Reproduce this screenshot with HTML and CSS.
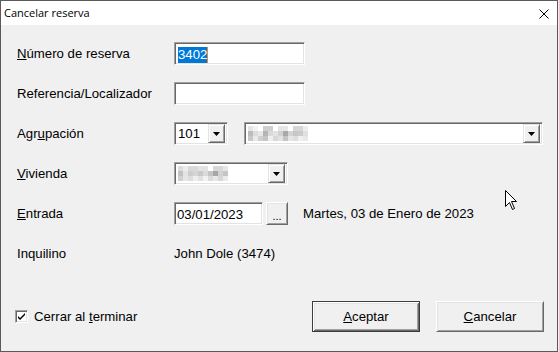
FILE: index.html
```html
<!DOCTYPE html>
<html lang="es">
<head>
    <meta charset="UTF-8">
    <meta name="viewport" content="width=device-width, initial-scale=1.0">
    <title>Cancelar reserva</title>
    <link rel="stylesheet" href="styles.css">
</head>
<body>
    <div class="window">
        <div class="titlebar">
            <span class="title">Cancelar reserva</span>
            <svg class="close" width="10" height="10" viewBox="0 0 10 10">
                <path d="M0.5 0.5 L9.5 9.5 M9.5 0.5 L0.5 9.5" stroke="#000" stroke-width="1" fill="none"/>
            </svg>
        </div>
        <div class="client">
            <div class="form">
                <div class="row">
                    <label class="lbl"><u>N</u>úmero de reserva</label>
                    <div class="edit edit-num"><span class="sel">3402</span><span class="caret"></span></div>
                </div>
                <div class="row">
                    <label class="lbl">Referencia/Localizador</label>
                    <div class="edit edit-num"></div>
                </div>
                <div class="row">
                    <label class="lbl">Agr<u>u</u>pación</label>
                    <div class="combo combo-small">
                        <span class="combo-text">101</span>
                        <span class="drop"><svg width="7" height="4" viewBox="0 0 7 4"><polygon points="0,0 7,0 3.5,4" fill="#000"/></svg></span>
                    </div>
                    <div class="combo combo-wide">
                        <svg class="blur" width="62" height="15" viewBox="0 0 62 15">
                            <rect x="0" y="0" width="5" height="5" fill="#e4e4e4"/>
                            <rect x="5" y="0" width="5" height="5" fill="#f2f2f2"/>
                            <rect x="15" y="0" width="10" height="5" fill="#cfcfcf"/>
                            <rect x="30" y="0" width="10" height="5" fill="#e6e6e6"/>
                            <rect x="45" y="0" width="10" height="5" fill="#d6d6d6"/>
                            <rect x="55" y="0" width="5" height="5" fill="#ededed"/>
                            <rect x="0" y="5" width="5" height="5" fill="#bdbdbd"/>
                            <rect x="5" y="5" width="5" height="5" fill="#dcdcdc"/>
                            <rect x="10" y="5" width="5" height="5" fill="#e8e8e8"/>
                            <rect x="15" y="5" width="5" height="5" fill="#b5b5b5"/>
                            <rect x="20" y="5" width="5" height="5" fill="#dadada"/>
                            <rect x="25" y="5" width="5" height="5" fill="#e3e3e3"/>
                            <rect x="30" y="5" width="5" height="5" fill="#d2d2d2"/>
                            <rect x="35" y="5" width="5" height="5" fill="#a9a9a9"/>
                            <rect x="40" y="5" width="5" height="5" fill="#d4d4d4"/>
                            <rect x="45" y="5" width="5" height="5" fill="#c7c7c7"/>
                            <rect x="50" y="5" width="5" height="5" fill="#cbcbcb"/>
                            <rect x="55" y="5" width="5" height="5" fill="#e0e0e0"/>
                            <rect x="0" y="10" width="5" height="5" fill="#c8c8c8"/>
                            <rect x="5" y="10" width="5" height="5" fill="#e9e9e9"/>
                            <rect x="10" y="10" width="5" height="5" fill="#d0d0d0"/>
                            <rect x="15" y="10" width="5" height="5" fill="#c5c5c5"/>
                            <rect x="20" y="10" width="5" height="5" fill="#efefef"/>
                            <rect x="25" y="10" width="5" height="5" fill="#d8d8d8"/>
                            <rect x="30" y="10" width="5" height="5" fill="#e2e2e2"/>
                            <rect x="35" y="10" width="5" height="5" fill="#c4c4c4"/>
                            <rect x="40" y="10" width="5" height="5" fill="#e6e6e6"/>
                            <rect x="45" y="10" width="5" height="5" fill="#dedede"/>
                            <rect x="50" y="10" width="5" height="5" fill="#f0f0f0"/>
                            <rect x="55" y="10" width="5" height="5" fill="#e8e8e8"/>
                        </svg>
                        <span class="drop"><svg width="7" height="4" viewBox="0 0 7 4"><polygon points="0,0 7,0 3.5,4" fill="#000"/></svg></span>
                    </div>
                </div>
                <div class="row">
                    <label class="lbl"><u>V</u>ivienda</label>
                    <div class="combo combo-mid">
                        <svg class="blur" width="60" height="17" viewBox="0 0 60 17">
                            <rect x="0" y="1" width="5" height="5" fill="#dcdcdc"/>
                            <rect x="5" y="1" width="5" height="5" fill="#ececec"/>
                            <rect x="10" y="1" width="10" height="5" fill="#d9d9d9"/>
                            <rect x="20" y="1" width="10" height="5" fill="#e3e3e3"/>
                            <rect x="35" y="1" width="10" height="5" fill="#d8d8d8"/>
                            <rect x="45" y="1" width="5" height="5" fill="#e6e6e6"/>
                            <rect x="0" y="6" width="5" height="5" fill="#c2c2c2"/>
                            <rect x="5" y="6" width="5" height="5" fill="#e4e4e4"/>
                            <rect x="10" y="6" width="5" height="5" fill="#cdcdcd"/>
                            <rect x="15" y="6" width="5" height="5" fill="#d5d5d5"/>
                            <rect x="20" y="6" width="5" height="5" fill="#c9c9c9"/>
                            <rect x="25" y="6" width="5" height="5" fill="#dadada"/>
                            <rect x="30" y="6" width="5" height="5" fill="#c4c4c4"/>
                            <rect x="35" y="6" width="5" height="5" fill="#a6a6a6"/>
                            <rect x="40" y="6" width="5" height="5" fill="#d2d2d2"/>
                            <rect x="45" y="6" width="5" height="5" fill="#c6c6c6"/>
                            <rect x="0" y="11" width="5" height="5" fill="#d0d0d0"/>
                            <rect x="5" y="11" width="5" height="5" fill="#e5e5e5"/>
                            <rect x="10" y="11" width="5" height="5" fill="#dddddd"/>
                            <rect x="15" y="11" width="5" height="5" fill="#eeeeee"/>
                            <rect x="20" y="11" width="5" height="5" fill="#e1e1e1"/>
                            <rect x="25" y="11" width="5" height="5" fill="#f2f2f2"/>
                            <rect x="30" y="11" width="5" height="5" fill="#dbdbdb"/>
                            <rect x="35" y="11" width="5" height="5" fill="#e8e8e8"/>
                            <rect x="40" y="11" width="5" height="5" fill="#d7d7d7"/>
                            <rect x="45" y="11" width="5" height="5" fill="#ebebeb"/>
                        </svg>
                        <span class="drop"><svg width="7" height="4" viewBox="0 0 7 4"><polygon points="0,0 7,0 3.5,4" fill="#000"/></svg></span>
                    </div>
                </div>
                <div class="row">
                    <label class="lbl"><u>E</u>ntrada</label>
                    <div class="edit edit-date">03/01/2023</div>
                    <button class="btn-dots">...</button>
                    <span class="date-text">Martes, 03 de Enero de 2023</span>
                </div>
                <div class="row">
                    <label class="lbl">Inquilino</label>
                    <span class="value">John Dole (3474)</span>
                </div>
            </div>
            <div class="footer">
                <span class="check">
                    <svg width="9" height="9" viewBox="0 0 9 9"><path d="M1 4 L3 6 L8 1 L8 3 L3 8 L1 6 Z" fill="#000"/></svg>
                </span>
                <span class="check-label">Cerrar al <u>t</u>erminar</span>
                <button class="btn btn-default"><u>A</u>ceptar</button>
                <button class="btn"><u>C</u>ancelar</button>
            </div>
        </div>
        <svg class="cursor" width="13" height="21" viewBox="0 0 13 21">
            <path d="M0.5 0.5 L0.5 16.5 L4.5 12.5 L7.5 19.5 L9.5 18.5 L6.5 11.5 L11.5 11.5 Z" fill="#fff" stroke="#000" stroke-width="1"/>
        </svg>
    </div>
</body>
</html>
```

FILE: styles.css
```css
body {
    margin: 0;
    font-family: 'Liberation Sans', Arial, sans-serif;
    font-size: 13.2px;
    color: #000;
    background: #f0f0f0;
}
.window {
    position: relative;
    width: 558px;
    height: 352px;
    box-sizing: border-box;
    border: 1px solid #5a5a5a;
    background: #f0f0f0;
    overflow: hidden;
}
.titlebar {
    height: 24px;
    background: #fff;
    display: flex;
    align-items: center;
}
.title {
    font-family: 'Open Sans', 'Noto Sans', sans-serif;
    font-size: 11px;
    padding-left: 3px;
    margin-top: -1px;
}
.close {
    margin-left: auto;
    margin-right: 8px;
    margin-top: 1px;
}
.client {
    padding: 17px 13px 0 16px;
}
.form {
    display: flex;
    flex-direction: column;
    gap: 17px;
}
.row {
    display: flex;
    align-items: center;
    height: 23px;
}
.lbl {
    width: 157px;
    flex: none;
}
.edit {
    height: 23px;
    box-sizing: border-box;
    background: #fff;
    border: 1px solid;
    border-color: #a0a0a0 #fff #fff #a0a0a0;
    box-shadow: inset 1px 1px #696969, inset -1px -1px #e3e3e3;
    padding: 2px 2px 0 3px;
    display: flex;
    align-items: center;
}
.edit-num {
    width: 131px;
}
.edit-date {
    width: 89px;
    padding-left: 2px;
}
.sel {
    background: #0078d7;
    color: #fff;
    line-height: 16px;
}
.caret {
    width: 1px;
    height: 16px;
    background: #f08a24;
}
.combo {
    height: 23px;
    box-sizing: border-box;
    background: #fff;
    border: 1px solid;
    border-color: #a0a0a0 #fff #fff #a0a0a0;
    box-shadow: inset 1px 1px #696969, inset -1px -1px #e3e3e3;
    padding: 2px 2px 2px 3px;
    display: flex;
    align-items: center;
}
.combo-small {
    width: 54px;
}
.combo-wide {
    width: 299px;
    margin-left: 16px;
}
.combo-mid {
    width: 114px;
}
.combo-text {
    flex: 1;
}
.blur {
    display: block;
    margin-right: auto;
}
.drop {
    width: 17px;
    height: 19px;
    box-sizing: border-box;
    margin-left: auto;
    background: #f0f0f0;
    border: 1px solid;
    border-color: #e3e3e3 #696969 #696969 #e3e3e3;
    box-shadow: inset 1px 1px #fff, inset -1px -1px #a0a0a0;
    display: flex;
    align-items: center;
    justify-content: center;
}
.drop svg {
    display: block;
}
.btn-dots {
    width: 22px;
    height: 23px;
    margin-left: 3px;
    padding: 0;
    font: inherit;
    font-size: 11px;
    background: #f0f0f0;
    border: 1px solid;
    border-color: #fff #696969 #696969 #fff;
    box-shadow: inset 1px 1px #e3e3e3, inset -1px -1px #a0a0a0;
    padding-top: 4px;
}
.date-text {
    margin-left: 15px;
}
.value {
    display: block;
}
.footer {
    display: flex;
    align-items: center;
    height: 31px;
    margin-top: 36px;
}
.check {
    width: 13px;
    height: 13px;
    box-sizing: border-box;
    margin-left: -2px;
    background: #fff;
    border: 1px solid;
    border-color: #a0a0a0 #fff #fff #a0a0a0;
    box-shadow: inset 1px 1px #696969, inset -1px -1px #e3e3e3;
    display: flex;
    align-items: center;
    justify-content: center;
}
.check svg {
    display: block;
}
.check-label {
    margin-left: 6px;
}
.btn {
    width: 108px;
    height: 31px;
    box-sizing: border-box;
    font: inherit;
    color: #000;
    background: #f0f0f0;
    border: 1px solid;
    border-color: #fff #696969 #696969 #fff;
    box-shadow: inset 1px 1px #e3e3e3, inset -1px -1px #a0a0a0;
    margin-left: 16px;
    padding: 0;
}
.btn-default {
    margin-left: auto;
    border-color: #3c3c3c;
    box-shadow: inset 1px 1px #fff, inset -1px -1px #696969, inset 2px 2px #e3e3e3, inset -2px -2px #a0a0a0;
}
.cursor {
    position: absolute;
    left: 504px;
    top: 189px;
}
```
